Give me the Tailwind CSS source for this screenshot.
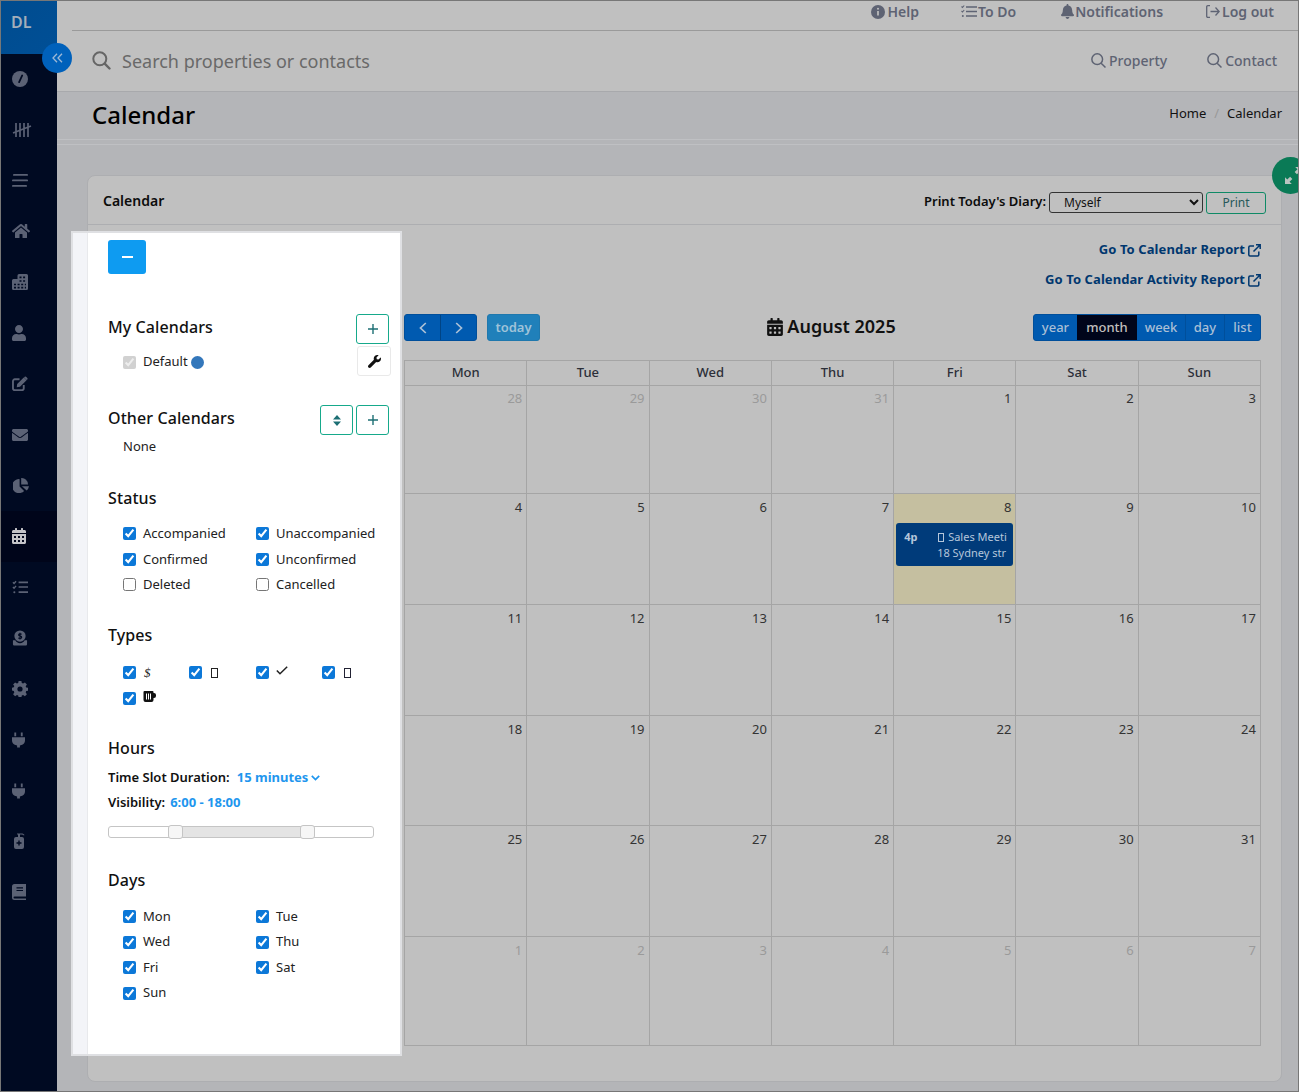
<!DOCTYPE html>
<html lang="en">
<head>
<meta charset="utf-8">
<title>Calendar</title>
<script src="https://cdn.jsdelivr.net/npm/@tailwindcss/browser@4"></script>
</head>
<body class="m-0 bg-[#b4b5b8]">
<div class="relative w-[1299px] h-[1092px] overflow-hidden flex border border-[#777] bg-[#b4b5b8] font-['Noto_Sans','Open_Sans',sans-serif] text-[13px] text-[#111]">

  <!-- sidebar -->
  <aside class="w-[56px] shrink-0 bg-[#000a22] flex flex-col text-[#5b6275]">
    <div class="h-[53px] bg-gradient-to-br from-[#004c8f] to-[#004f96] pl-[10px] pt-[9px] text-[16px] leading-[24px] font-semibold text-[#a3aeba]">DL</div>
    <div class="h-[50.75px] pl-[11px] flex items-center"><svg class="w-[16px] h-[16px]" viewBox="0 0 18 18"><circle cx="9" cy="9" r="9" fill="currentColor"/><path d="M8 12.5 L11.5 5" stroke="#000a22" stroke-width="2" stroke-linecap="round"/></svg></div>
    <div class="h-[50.75px] pl-[11px] flex items-center"><svg class="w-[20px] h-[16px]" viewBox="0 0 20 16" fill="none" stroke="currentColor" stroke-width="1.7"><path d="M4 1v14M8 1v14M12 1v14M16 1v14M1 11 19 4"/></svg></div>
    <div class="h-[50.75px] pl-[11px] flex items-center"><svg class="w-[16px] h-[13px]" viewBox="0 0 16 13" fill="currentColor"><rect x="1" y="0" width="15" height="1.8" rx=".9"/><rect x="0" y="5.500" width="16" height="1.8" rx=".9"/><rect x="0" y="11" width="15" height="1.8" rx=".9"/></svg></div>
    <div class="h-[50.75px] pl-[11px] flex items-center"><svg class="w-[18px] h-[16px] mt-[-2px]" viewBox="0 0 576 512" fill="currentColor"><path d="M280.37 148.26L96 300.11V464a16 16 0 0 0 16 16l112.06-.29a16 16 0 0 0 15.92-16V368a16 16 0 0 1 16-16h64a16 16 0 0 1 16 16v95.64a16 16 0 0 0 16 16.05L464 480a16 16 0 0 0 16-16V300L295.67 148.26a12.19 12.19 0 0 0-15.3 0zM571.6 251.47L488 182.56V44.05a12 12 0 0 0-12-12h-56a12 12 0 0 0-12 12v72.61L318.47 43a48 48 0 0 0-61 0L4.34 251.47a12 12 0 0 0-1.6 16.9l25.5 31A12 12 0 0 0 45.15 301l235.22-193.74a12.19 12.19 0 0 1 15.3 0L530.9 301a12 12 0 0 0 16.9-1.6l25.5-31a12 12 0 0 0-1.7-16.93z"/></svg></div>
    <div class="h-[50.75px] pl-[11px] flex items-center"><svg class="w-[16px] h-[16px]" viewBox="0 0 16 16"><path fill="currentColor" d="M7 0h7.5A1.5 1.5 0 0 1 16 1.5V14.5A1.5 1.5 0 0 1 14.5 16H1.5A1.5 1.5 0 0 1 0 14.5V6.5A1.5 1.5 0 0 1 1.5 5H5.5V1.5A1.5 1.5 0 0 1 7 0z"/><path stroke="#000a22" stroke-width="1.6" stroke-dasharray="2 1.6" d="M7.5 3.4H14M7.5 7H14M2 10.5H14M2 13.6H14" fill="none"/></svg></div>
    <div class="h-[50.75px] pl-[11px] flex items-center"><svg class="w-[14px] h-[16px]" viewBox="0 0 448 512" fill="currentColor"><path d="M224 256c70.7 0 128-57.3 128-128S294.7 0 224 0 96 57.3 96 128s57.3 128 128 128zm89.6 32h-16.7c-22.2 10.2-46.9 16-72.9 16s-50.6-5.8-72.9-16h-16.7C60.2 288 0 348.2 0 422.4V464c0 26.5 21.5 48 48 48h352c26.5 0 48-21.5 48-48v-41.6c0-74.2-60.2-134.4-134.4-134.4z"/></svg></div>
    <div class="h-[50.75px] pl-[11px] flex items-center"><svg class="w-[16px] h-[15px]" viewBox="0 0 17 16"><path fill="none" stroke="currentColor" stroke-width="2" d="M12.5 9.5V13a2 2 0 0 1-2 2H3a2 2 0 0 1-2-2V5.5a2 2 0 0 1 2-2h5"/><path fill="currentColor" d="M5.5 8.5 12.5 1.5 15.5 4.5 8.5 11.5 5 12z M13.5.8a1 1 0 0 1 1.4 0l1.4 1.4a1 1 0 0 1 0 1.4l-.7.7-2.8-2.8z"/></svg></div>
    <div class="h-[50.75px] pl-[11px] flex items-center"><svg class="w-[16px] h-[12px]" viewBox="0 64 512 384" preserveAspectRatio="none" fill="currentColor"><path d="M502.3 190.8c3.9-3.1 9.7-.2 9.7 4.7V400c0 26.5-21.5 48-48 48H48c-26.5 0-48-21.5-48-48V195.6c0-5 5.7-7.8 9.7-4.7 22.4 17.4 52.1 39.5 154.1 113.6 21.1 15.4 56.7 47.8 92.2 47.6 35.7.3 72-32.8 92.3-47.6 102-74.1 131.6-96.3 154-113.7zM256 320c23.2.4 56.6-29.2 73.4-41.4 132.7-96.3 142.8-104.7 173.4-128.7 5.8-4.5 9.2-11.5 9.2-18.9v-19c0-26.5-21.5-48-48-48H48C21.5 64 0 85.5 0 112v19c0 7.4 3.4 14.3 9.2 18.9 30.6 23.9 40.7 32.4 173.4 128.7 16.8 12.2 50.2 41.8 73.4 41.4z"/></svg></div>
    <div class="h-[50.75px] pl-[12px] flex items-center"><svg class="w-[16px] h-[15px]" viewBox="0 0 17 16" fill="currentColor"><path d="M7 2.2V9l4.8 4.8A7.5 7.5 0 1 1 7 1.2z"/><path d="M8.7 0A7 7 0 0 1 16 7H8.7z"/><path d="M9.5 8.7H17A7.5 7.5 0 0 1 14.5 13.3z"/></svg></div>
    <div class="h-[50.75px] pl-[11px] flex items-center bg-[#00051a] text-[#c4c4c8]"><svg class="w-[14px] h-[16px]" viewBox="0 0 448 512" fill="currentColor"><path d="M0 464c0 26.5 21.5 48 48 48h352c26.5 0 48-21.5 48-48V192H0v272zm320-196c0-6.6 5.4-12 12-12h40c6.6 0 12 5.4 12 12v40c0 6.6-5.4 12-12 12h-40c-6.6 0-12-5.4-12-12v-40zm0 128c0-6.6 5.4-12 12-12h40c6.6 0 12 5.4 12 12v40c0 6.6-5.4 12-12 12h-40c-6.6 0-12-5.4-12-12v-40zM192 268c0-6.6 5.4-12 12-12h40c6.6 0 12 5.4 12 12v40c0 6.6-5.4 12-12 12h-40c-6.6 0-12-5.4-12-12v-40zm0 128c0-6.6 5.4-12 12-12h40c6.6 0 12 5.4 12 12v40c0 6.6-5.4 12-12 12h-40c-6.6 0-12-5.4-12-12v-40zM64 268c0-6.6 5.4-12 12-12h40c6.6 0 12 5.4 12 12v40c0 6.6-5.4 12-12 12H76c-6.6 0-12-5.4-12-12v-40zm0 128c0-6.6 5.4-12 12-12h40c6.6 0 12 5.4 12 12v40c0 6.6-5.4 12-12 12H76c-6.6 0-12-5.4-12-12v-40zM400 64h-48V16c0-8.8-7.2-16-16-16h-32c-8.8 0-16 7.2-16 16v48H160V16c0-8.8-7.2-16-16-16h-32c-8.8 0-16 7.2-16 16v48H48C21.5 64 0 85.5 0 112v48h448v-48c0-26.5-21.5-48-48-48z"/></svg></div>
    <div class="h-[50.75px] pl-[11px] flex items-center"><svg class="w-[16px] h-[14px]" viewBox="0 0 17 14" fill="none" stroke="currentColor"><path stroke-width="1.5" d="M1 2 2.2 3.2 4.3.8M1 7 2.2 8.2 4.3 5.8"/><circle cx="2.5" cy="12.5" r="1.1" fill="currentColor" stroke="none"/><path stroke-width="1.8" d="M7 2H17M7 7H17M7 12.5H17"/></svg></div>
    <div class="h-[50.75px] pl-[11px] flex items-center"><svg class="w-[16px] h-[16px]" viewBox="0 0 17 16"><circle cx="8.5" cy="6" r="6" fill="currentColor"/><path fill="none" stroke="#000a22" stroke-width="1.2" d="M10.2 4.2C9.5 3.4 7 3.2 7 4.9 7 6.6 10.3 5.5 10.3 7.2 10.3 8.8 7.6 8.6 6.7 7.8M8.5 2.5v7"/><path fill="currentColor" d="M1 10.5h2.5c1 2 2.5 3 5 3s4-1 5-3H16v4.2a1.3 1.3 0 0 1-1.3 1.3H2.3A1.3 1.3 0 0 1 1 14.7z"/></svg></div>
    <div class="h-[50.75px] pl-[11px] flex items-center"><svg class="w-[16px] h-[16px] mt-[2px]" viewBox="0 0 16 16"><path fill="currentColor" d="M6.6 0h2.800l.4 2.100 1.300.5L12.900 1.400l2 2-1.200 1.800.5 1.300 2.100.4v2.800l-2.100.4-.5 1.300 1.200 1.800-2 2-1.800-1.200-1.300.5-.4 2.100H6.600l-.4-2.100-1.300-.5-1.800 1.200-2-2 1.200-1.800-.5-1.300L-.3 9.500V6.700l2.100-.4.5-1.300L1.100 3.400l2-2 1.800 1.200 1.300-.5z"/><circle cx="8" cy="8" r="2.600" fill="#000a22"/></svg></div>
    <div class="h-[50.75px] pl-[11px] flex items-center"><svg class="w-[13px] h-[16px] mt-[2px]" viewBox="0 0 14 16" fill="currentColor"><path d="M2.500 0h2v4h-2zM9.500 0h2v4h-2zM0 5h14v3.500c0 2-1 3.500-3 4.500L8.500 14v2H5.500v-2L3 13C1 12 0 10.500 0 8.500z"/></svg></div>
    <div class="h-[50.75px] pl-[11px] flex items-center"><svg class="w-[13px] h-[16px] mt-[2px]" viewBox="0 0 14 16" fill="currentColor"><path d="M2.500 0h2v4h-2zM9.500 0h2v4h-2zM0 5h14v3.500c0 2-1 3.500-3 4.500L8.500 14v2H5.500v-2L3 13C1 12 0 10.500 0 8.500z"/></svg></div>
    <div class="h-[50.75px] pl-[12px] flex items-center"><svg class="w-[12px] h-[17px]" viewBox="0 0 11 17"><path fill="currentColor" d="M3.500 1.500H8c1.500 0 2.500.6 3 1.600l-.6.4C9.800 2.800 9 2.500 8 2.500H6.500V5H8.500a2 2 0 0 1 2 2v8a2 2 0 0 1-2 2h-6a2 2 0 0 1-2-2V7a2 2 0 0 1 2-2h2V2.500h-1z"/><path stroke="#000a22" stroke-width="1.400" d="M5.500 8.500v5M3 11h5"/></svg></div>
    <div class="h-[50.75px] pl-[11px] flex items-center"><svg class="w-[14px] h-[16px] mt-[2px]" viewBox="0 0 14 16"><path fill="currentColor" d="M2.500 0H14v12.500H2.500a1 1 0 0 0 0 2H14V16H2.500A2.500 2.500 0 0 1 0 13.500V2.500A2.500 2.500 0 0 1 2.500 0z"/><path stroke="#000a22" stroke-width="1.200" d="M4.500 3.800h6.500M4.500 6.500h6.500"/></svg></div>
  </aside>

  <!-- main -->
  <div class="flex-1 min-w-0 flex flex-col">
    <header class="bg-[#c0c0c0] h-[91px] border-b border-[#a8a9ac] shrink-0">
      <div class="ml-[15px] h-[30px] border-b border-[#9a9a9a] flex justify-end items-center pr-[24px] pb-[8px] text-[14px] font-semibold text-[#5e6373]">
        <span class="flex items-center gap-[3px]"><svg class="w-[14px] h-[14px]" viewBox="0 0 14 14"><circle cx="7" cy="7" r="7" fill="currentColor"/><path stroke="#c0c0c0" stroke-width="1.700" d="M7 6v4.500"/><circle cx="7" cy="3.800" r="1" fill="#c0c0c0"/></svg>Help</span>
        <span class="flex items-center gap-[1px] ml-[42px]"><svg class="w-[16px] h-[13px]" viewBox="0 0 16 13" fill="none" stroke="currentColor"><path stroke-width="1.100" d="M.5 1.500 1.500 2.500 3.200.5M.5 6 1.500 7 3.200 5"/><circle cx="1.800" cy="11" r="1" fill="currentColor" stroke="none"/><path stroke-width="1.400" d="M5 2h11M5 6.500h11M5 11h11"/></svg>To Do</span>
        <span class="flex items-center gap-[1px] ml-[45px]"><svg class="w-[13px] h-[15px]" viewBox="0 0 448 512" fill="currentColor"><path d="M224 512c35.320 0 63.970-28.650 63.970-64H160.030c0 35.350 28.650 64 63.970 64zm215.390-149.710c-19.320-20.760-55.470-51.990-55.470-154.290 0-77.700-54.480-139.900-127.940-155.160V32c0-17.670-14.320-32-31.980-32s-31.980 14.330-31.980 32v20.840C118.560 68.100 64.080 130.300 64.080 208c0 102.300-36.150 133.530-55.470 154.290-6 6.450-8.660 14.160-8.610 21.710.110 16.400 12.980 32 32.100 32h383.800c19.120 0 32-15.600 32.100-32 .050-7.550-2.610-15.270-8.610-21.710z"/></svg>Notifications</span>
        <span class="flex items-center gap-[2px] ml-[43px]"><svg class="w-[14px] h-[13px]" viewBox="0 0 14 13" fill="none" stroke="currentColor" stroke-width="1.300"><path d="M4 .7H1.800A1.100 1.100 0 0 0 .7 1.800v9.400a1.100 1.100 0 0 0 1.100 1.100H4M9.500 2.500 13.200 6.500 9.500 10.500M13 6.500H4.500"/></svg>Log out</span>
      </div>
      <div class="h-[60px] flex items-center pl-[35px] pr-[21px]">
        <svg class="w-[19px] h-[19px] mt-[-2px]" viewBox="0 0 19 19" fill="none" stroke="#666" stroke-width="2"><circle cx="7.800" cy="7.800" r="6.500"/><path stroke-width="2.400" stroke-linecap="round" d="M12.700 12.700 17.500 17.500"/></svg>
        <span class="ml-[11px] text-[18px] text-[#696969]">Search properties or contacts</span>
        <span class="ml-auto mt-[-2px] flex items-center gap-[3px] text-[14px] font-medium text-[#5e6373]"><svg class="w-[15px] h-[15px]" viewBox="0 0 14 14" fill="none" stroke="currentColor" stroke-width="1.400"><circle cx="5.800" cy="5.800" r="5"/><path d="M9.500 9.500 13.500 13.500"/></svg>Property</span>
        <span class="ml-[40px] mt-[-2px] flex items-center gap-[3px] text-[14px] font-medium text-[#5e6373]"><svg class="w-[15px] h-[15px]" viewBox="0 0 14 14" fill="none" stroke="currentColor" stroke-width="1.400"><circle cx="5.800" cy="5.800" r="5"/><path d="M9.500 9.500 13.500 13.500"/></svg>Contact</span>
      </div>
    </header>

    <div class="h-[48px] shrink-0 border-b border-[#bfc0c3] flex items-center justify-between pl-[35px] pr-[16px]">
      <h1 class="text-[24px] font-medium text-black mt-[-2px]">Calendar</h1>
      <div class="text-[13px] text-[#111] flex items-center mt-[-3px]"><span>Home</span><span class="mx-[8px] text-[#999]">/</span><span>Calendar</span></div>
    </div>
    <div class="h-[5px] shrink-0 border-b border-[#bfc0c3]"></div>

    <section class="mt-[30px] ml-[30px] mr-[16px] h-[907px] bg-[#c0c0c0] border border-[#adaeb1] rounded-[8px] flex flex-col">
      <div class="h-[49px] shrink-0 border-b border-[#adaeb1] flex items-center justify-between pl-[15px] pr-[15px]">
        <span class="text-[14px] font-semibold text-[#0c0c0c]">Calendar</span>
        <div class="flex items-center text-[13px] mt-[4px]">
          <span class="font-semibold text-[#0c0c0c] mr-[3px] mt-[-1px]">Print Today's Diary:</span>
          <select class="w-[154px] h-[21px] border border-[#333] rounded-[3px] bg-transparent pl-[10px] text-[12px] text-[#111]"><option>Myself</option></select>
          <button class="ml-[3px] mt-[1px] w-[60px] h-[22px] border border-[#0f8a66] rounded-[3px] text-[12px] text-[#27585a]">Print</button>
        </div>
      </div>

      <div class="pl-[316px] pr-[20px] flex flex-col">
        <div class="mt-[16px] h-[18px] flex justify-end items-center gap-[3px] text-[13px] font-bold tracking-[0.08px] text-[#00376f]">Go To Calendar Report
          <svg class="w-[13px] h-[13px]" viewBox="0 0 13 13" fill="none" stroke="currentColor" stroke-width="1.500"><path d="M6 2H2a1.200 1.200 0 0 0-1.200 1.200v7.600A1.200 1.200 0 0 0 2 12h7.600a1.200 1.200 0 0 0 1.200-1.200V7.500M5.500 7.500 12 1M8 .8h4.200V5"/></svg></div>
        <div class="mt-[12px] h-[18px] flex justify-end items-center gap-[3px] text-[13px] font-bold tracking-[0.08px] text-[#00376f]">Go To Calendar Activity Report
          <svg class="w-[13px] h-[13px]" viewBox="0 0 13 13" fill="none" stroke="currentColor" stroke-width="1.500"><path d="M6 2H2a1.200 1.200 0 0 0-1.200 1.200v7.600A1.200 1.200 0 0 0 2 12h7.600a1.200 1.200 0 0 0 1.200-1.200V7.500M5.500 7.500 12 1M8 .8h4.200V5"/></svg></div>

        <div class="mt-[25px] h-[27px] grid grid-cols-3 items-center">
          <div class="flex items-center">
            <div class="flex h-[27px] w-[73px] rounded-[3px] overflow-hidden bg-[#005ab0] border border-[#004f9b]">
              <span class="w-[36px] border-r border-[#004484] flex items-center justify-center"><svg class="w-[8px] h-[12px]" viewBox="0 0 8 12" fill="none" stroke="#a9bfd6" stroke-width="1.700"><path d="M6.800 1 1.500 6 6.800 11"/></svg></span>
              <span class="flex-1 flex items-center justify-center"><svg class="w-[8px] h-[12px]" viewBox="0 0 8 12" fill="none" stroke="#a9bfd6" stroke-width="1.700"><path d="M1.200 1 6.500 6 1.200 11"/></svg></span>
            </div>
            <span class="ml-[10px] w-[53px] h-[27px] rounded-[3px] bg-[#2080ba] border border-[#1f78ad] flex items-center justify-center text-[13px] font-semibold text-[#9fc3d9]">today</span>
          </div>
          <div class="flex items-center justify-center gap-[4px] text-[18px] font-semibold text-[#111] mt-[-2px] ml-[-2px]">
            <svg class="w-[16px] h-[18px]" viewBox="0 0 448 512" fill="currentColor"><path d="M0 464c0 26.500 21.500 48 48 48h352c26.500 0 48-21.500 48-48V192H0v272zm320-196c0-6.600 5.400-12 12-12h40c6.600 0 12 5.400 12 12v40c0 6.600-5.400 12-12 12h-40c-6.600 0-12-5.400-12-12v-40zm0 128c0-6.600 5.400-12 12-12h40c6.600 0 12 5.400 12 12v40c0 6.600-5.400 12-12 12h-40c-6.600 0-12-5.400-12-12v-40zM192 268c0-6.600 5.400-12 12-12h40c6.600 0 12 5.400 12 12v40c0 6.600-5.400 12-12 12h-40c-6.600 0-12-5.400-12-12v-40zm0 128c0-6.600 5.400-12 12-12h40c6.600 0 12 5.400 12 12v40c0 6.600-5.400 12-12 12h-40c-6.600 0-12-5.400-12-12v-40zM64 268c0-6.600 5.400-12 12-12h40c6.600 0 12 5.400 12 12v40c0 6.600-5.400 12-12 12H76c-6.600 0-12-5.400-12-12v-40zm0 128c0-6.600 5.400-12 12-12h40c6.600 0 12 5.400 12 12v40c0 6.600-5.400 12-12 12H76c-6.600 0-12-5.400-12-12v-40zM400 64h-48V16c0-8.800-7.200-16-16-16h-32c-8.800 0-16 7.200-16 16v48H160V16c0-8.800-7.200-16-16-16h-32c-8.800 0-16 7.200-16 16v48H48C21.500 64 0 85.500 0 112v48h448v-48c0-26.500-21.500-48-48-48z"/></svg>August 2025</div>
          <div class="flex justify-end">
            <div class="flex h-[27px] rounded-[3px] overflow-hidden bg-[#005ab0] border border-[#004f9b] text-[13px] font-medium text-[#a9bfd6]">
              <span class="w-[43px] flex items-center justify-center">year</span>
              <span class="w-[60px] flex items-center justify-center bg-[#00051a] text-[#c0bfbd]">month</span>
              <span class="w-[49px] border-r border-[#004f9b] flex items-center justify-center">week</span>
              <span class="w-[39px] border-r border-[#004f9b] flex items-center justify-center">day</span>
              <span class="w-[35px] flex items-center justify-center">list</span>
            </div>
          </div>
        </div>

        <div class="mt-[19px] grid grid-cols-7 grid-rows-[25px_108px_111px_111px_110px_111px_109px] border-l border-t border-[#a5a5a5] text-[13px] text-[#333] text-right">
          <div class="border-r border-b border-[#a5a5a5] flex items-center justify-center font-medium text-[#2c2f38]">Mon</div>
          <div class="border-r border-b border-[#a5a5a5] flex items-center justify-center font-medium text-[#2c2f38]">Tue</div>
          <div class="border-r border-b border-[#a5a5a5] flex items-center justify-center font-medium text-[#2c2f38]">Wed</div>
          <div class="border-r border-b border-[#a5a5a5] flex items-center justify-center font-medium text-[#2c2f38]">Thu</div>
          <div class="border-r border-b border-[#a5a5a5] flex items-center justify-center font-medium text-[#2c2f38]">Fri</div>
          <div class="border-r border-b border-[#a5a5a5] flex items-center justify-center font-medium text-[#2c2f38]">Sat</div>
          <div class="border-r border-b border-[#a5a5a5] flex items-center justify-center font-medium text-[#2c2f38]">Sun</div>

          <div class="border-r border-b border-[#a5a5a5] pr-[4px] pt-[3px] text-[#9a9a9a]">28</div>
          <div class="border-r border-b border-[#a5a5a5] pr-[4px] pt-[3px] text-[#9a9a9a]">29</div>
          <div class="border-r border-b border-[#a5a5a5] pr-[4px] pt-[3px] text-[#9a9a9a]">30</div>
          <div class="border-r border-b border-[#a5a5a5] pr-[4px] pt-[3px] text-[#9a9a9a]">31</div>
          <div class="border-r border-b border-[#a5a5a5] pr-[4px] pt-[3px]">1</div>
          <div class="border-r border-b border-[#a5a5a5] pr-[4px] pt-[3px]">2</div>
          <div class="border-r border-b border-[#a5a5a5] pr-[4px] pt-[3px]">3</div>

          <div class="border-r border-b border-[#a5a5a5] pr-[4px] pt-[4px]">4</div>
          <div class="border-r border-b border-[#a5a5a5] pr-[4px] pt-[4px]">5</div>
          <div class="border-r border-b border-[#a5a5a5] pr-[4px] pt-[4px]">6</div>
          <div class="border-r border-b border-[#a5a5a5] pr-[4px] pt-[4px]">7</div>
          <div class="border-r border-b border-[#a5a5a5] pr-[4px] pt-[4px] bg-[#c5bfa0] flex flex-col">
            <span>8</span>
            <div class="mt-[5px] ml-[2px] mr-[-2px] h-[43px] rounded-[3px] bg-[#003b7a] text-left text-[11px] leading-[16px] text-[#b5c6da] relative">
              <div class="flex pt-[6px] pl-[8px]"><span class="font-bold w-[34px]">4p</span><span class="inline-block w-[6px] h-[9px] border border-[#b5c6da] mt-[4px] mr-[4px]"></span><span class="whitespace-nowrap">Sales Meeti</span></div>
              <div class="pl-[41px] whitespace-nowrap">18 Sydney str</div>
            </div>
          </div>
          <div class="border-r border-b border-[#a5a5a5] pr-[4px] pt-[4px]">9</div>
          <div class="border-r border-b border-[#a5a5a5] pr-[4px] pt-[4px]">10</div>

          <div class="border-r border-b border-[#a5a5a5] pr-[4px] pt-[4px]">11</div>
          <div class="border-r border-b border-[#a5a5a5] pr-[4px] pt-[4px]">12</div>
          <div class="border-r border-b border-[#a5a5a5] pr-[4px] pt-[4px]">13</div>
          <div class="border-r border-b border-[#a5a5a5] pr-[4px] pt-[4px]">14</div>
          <div class="border-r border-b border-[#a5a5a5] pr-[4px] pt-[4px]">15</div>
          <div class="border-r border-b border-[#a5a5a5] pr-[4px] pt-[4px]">16</div>
          <div class="border-r border-b border-[#a5a5a5] pr-[4px] pt-[4px]">17</div>

          <div class="border-r border-b border-[#a5a5a5] pr-[4px] pt-[4px]">18</div>
          <div class="border-r border-b border-[#a5a5a5] pr-[4px] pt-[4px]">19</div>
          <div class="border-r border-b border-[#a5a5a5] pr-[4px] pt-[4px]">20</div>
          <div class="border-r border-b border-[#a5a5a5] pr-[4px] pt-[4px]">21</div>
          <div class="border-r border-b border-[#a5a5a5] pr-[4px] pt-[4px]">22</div>
          <div class="border-r border-b border-[#a5a5a5] pr-[4px] pt-[4px]">23</div>
          <div class="border-r border-b border-[#a5a5a5] pr-[4px] pt-[4px]">24</div>

          <div class="border-r border-b border-[#a5a5a5] pr-[4px] pt-[4px]">25</div>
          <div class="border-r border-b border-[#a5a5a5] pr-[4px] pt-[4px]">26</div>
          <div class="border-r border-b border-[#a5a5a5] pr-[4px] pt-[4px]">27</div>
          <div class="border-r border-b border-[#a5a5a5] pr-[4px] pt-[4px]">28</div>
          <div class="border-r border-b border-[#a5a5a5] pr-[4px] pt-[4px]">29</div>
          <div class="border-r border-b border-[#a5a5a5] pr-[4px] pt-[4px]">30</div>
          <div class="border-r border-b border-[#a5a5a5] pr-[4px] pt-[4px]">31</div>

          <div class="border-r border-b border-[#a5a5a5] pr-[4px] pt-[4px] text-[#9a9a9a]">1</div>
          <div class="border-r border-b border-[#a5a5a5] pr-[4px] pt-[4px] text-[#9a9a9a]">2</div>
          <div class="border-r border-b border-[#a5a5a5] pr-[4px] pt-[4px] text-[#9a9a9a]">3</div>
          <div class="border-r border-b border-[#a5a5a5] pr-[4px] pt-[4px] text-[#9a9a9a]">4</div>
          <div class="border-r border-b border-[#a5a5a5] pr-[4px] pt-[4px] text-[#9a9a9a]">5</div>
          <div class="border-r border-b border-[#a5a5a5] pr-[4px] pt-[4px] text-[#9a9a9a]">6</div>
          <div class="border-r border-b border-[#a5a5a5] pr-[4px] pt-[4px] text-[#9a9a9a]">7</div>
        </div>
      </div>
    </section>
  </div>

  <!-- collapse button over the sidebar edge -->
  <div class="absolute left-[41px] top-[42px] w-[30px] h-[30px] rounded-full bg-[#0061bb] flex items-center justify-center">
    <svg class="w-[11px] h-[10px]" viewBox="0 0 11 10" fill="none" stroke="#9fb9d6" stroke-width="1.300"><path d="M5 .8 1 5 5 9.200M10 .8 6 5 10 9.200"/></svg>
  </div>

  <!-- green expand tab -->
  <div class="absolute left-[1271px] top-[156px] w-[37px] h-[37px] rounded-full bg-[#0a7a56] flex items-center pl-[13px]">
    <svg class="w-[17px] h-[17px] shrink-0" viewBox="0 0 15 15" fill="#b9c4c0"><path d="M0 15V9l2 2 2.500-2.500 2 2L4 13l2 2zM15 0v6l-2-2-2.500 2.500-2-2L11 2 9 0z"/></svg>
  </div>

  <!-- white options panel -->
  <div class="absolute left-[70px] top-[230px] w-[331px] h-[825px] border-2 border-[#dfe0e3] bg-white flex text-[#222]">
    <div class="w-[15px] shrink-0 bg-[#f3f4f8] border-r border-[#e8e9ec]"></div>
    <div class="flex-1 pl-[20px] flex flex-col">
      <button class="mt-[7px] w-[38px] h-[34px] shrink-0 rounded-[3px] bg-[#0e9bf1] flex items-center justify-center"><span class="w-[11px] h-[2px] bg-white"></span></button>

      <div class="mt-[40px] h-[30px] flex items-center justify-between pr-[11px]">
        <h2 class="text-[16px] font-medium tracking-[0.1px] text-[#111] mt-[-4px]">My Calendars</h2>
        <button class="w-[33px] h-[30px] border border-[#16a98b] rounded-[3px] flex items-center justify-center"><svg class="w-[10px] h-[10px]" viewBox="0 0 10 10" stroke="#1d6f74" stroke-width="1.400"><path d="M5 0v10M0 5h10"/></svg></button>
      </div>
      <div class="mt-[2px] h-[30px] flex items-center justify-between pl-[15px] pr-[9px]">
        <label class="flex items-center mt-[2px]"><input type="checkbox" checked disabled class="w-[13px] h-[13px] m-0"><span class="ml-[7px]">Default</span><span class="ml-[3px] w-[13px] h-[13px] rounded-full bg-[#3377bb]"></span></label>
        <button class="w-[34px] h-[30px] border border-[#e9e9e9] rounded-[3px] flex items-center justify-center"><svg class="w-[13px] h-[13px]" viewBox="0 0 512 512" fill="#111"><path d="M507.730 109.100c-2.240-9.030-13.540-12.090-20.120-5.510l-74.360 74.360-67.880-11.310-11.310-67.880 74.360-74.360c6.620-6.620 3.430-17.900-5.660-20.160-47.380-11.740-99.550.910-136.580 37.930-39.640 39.640-50.550 97.100-34.050 147.200L18.740 402.760c-24.990 24.990-24.990 65.510 0 90.500 24.990 24.990 65.510 24.990 90.500 0l213.210-213.210c50.120 16.710 107.470 5.680 147.370-34.220 37.070-37.070 49.700-89.320 37.910-136.730z"/></svg></button>
      </div>

      <div class="mt-[29px] h-[30px] flex items-center justify-between pr-[11px]">
        <h2 class="text-[16px] font-medium tracking-[0.1px] text-[#111] mt-[-4px]">Other Calendars</h2>
        <div class="flex gap-[3px]">
          <button class="w-[33px] h-[30px] border border-[#16a98b] rounded-[3px] flex items-center justify-center"><svg class="w-[8px] h-[11px]" viewBox="0 0 8 11" fill="#1d6f74"><path d="M4 0 8 4.500H0zM4 11 0 6.500H8z"/></svg></button>
          <button class="w-[33px] h-[30px] border border-[#16a98b] rounded-[3px] flex items-center justify-center"><svg class="w-[10px] h-[10px]" viewBox="0 0 10 10" stroke="#1d6f74" stroke-width="1.400"><path d="M5 0v10M0 5h10"/></svg></button>
        </div>
      </div>
      <div class="mt-[1px] h-[20px] pl-[15px] leading-[20px]">None</div>

      <h2 class="mt-[30px] h-[24px] text-[16px] leading-[24px] font-medium tracking-[0.1px] text-[#111]">Status</h2>
      <div class="mt-[11px] pl-[15px] grid grid-cols-[133px_1fr] auto-rows-[25.5px] items-center">
        <label class="flex items-center"><input type="checkbox" checked class="w-[13px] h-[13px] m-0 accent-[#0c78d8]"><span class="ml-[7px]">Accompanied</span></label>
        <label class="flex items-center"><input type="checkbox" checked class="w-[13px] h-[13px] m-0 accent-[#0c78d8]"><span class="ml-[7px]">Unaccompanied</span></label>
        <label class="flex items-center"><input type="checkbox" checked class="w-[13px] h-[13px] m-0 accent-[#0c78d8]"><span class="ml-[7px]">Confirmed</span></label>
        <label class="flex items-center"><input type="checkbox" checked class="w-[13px] h-[13px] m-0 accent-[#0c78d8]"><span class="ml-[7px]">Unconfirmed</span></label>
        <label class="flex items-center"><input type="checkbox" class="w-[13px] h-[13px] m-0"><span class="ml-[7px]">Deleted</span></label>
        <label class="flex items-center"><input type="checkbox" class="w-[13px] h-[13px] m-0"><span class="ml-[7px]">Cancelled</span></label>
      </div>

      <h2 class="mt-[25px] h-[24px] text-[16px] leading-[24px] font-medium tracking-[0.1px] text-[#111]">Types</h2>
      <div class="mt-[13px] pl-[15px] grid grid-cols-[66px_67px_66px_66px] auto-rows-[26px] items-center">
        <label class="flex items-center"><input type="checkbox" checked class="w-[13px] h-[13px] m-0 accent-[#0c78d8]"><span class="ml-[8px] text-[13px] italic font-['Liberation_Serif',serif]">$</span></label>
        <label class="flex items-center"><input type="checkbox" checked class="w-[13px] h-[13px] m-0 accent-[#0c78d8]"><span class="ml-[9px] w-[7px] h-[10px] border border-[#222]"></span></label>
        <label class="flex items-center"><input type="checkbox" checked class="w-[13px] h-[13px] m-0 accent-[#0c78d8]"><svg class="ml-[7px] mt-[-4px] w-[12px] h-[9px]" viewBox="0 0 12 9" fill="none" stroke="#222" stroke-width="1.500"><path d="M.8 4.500 4 7.800 11.200 .8"/></svg></label>
        <label class="flex items-center"><input type="checkbox" checked class="w-[13px] h-[13px] m-0 accent-[#0c78d8]"><span class="ml-[9px] w-[7px] h-[10px] border border-[#223]"></span></label>
        <label class="flex items-center"><input type="checkbox" checked class="w-[13px] h-[13px] m-0 accent-[#0c78d8]"><svg class="ml-[7px] mt-[-5px] w-[13px] h-[11px]" viewBox="0 0 13 11"><path fill="#111" d="M1.500 0H9.500a1 1 0 0 1 1 1V2h.5A2 2 0 0 1 13 4V5a2 2 0 0 1-2 2h-.5V9a2 2 0 0 1-2 2h-6a2 2 0 0 1-2-2V1a1 1 0 0 1 1-1z"/><path stroke="#fff" stroke-width="1" d="M3.500 2.500V8.500M5.500 2.500V8.500M7.500 2.500V8.500"/></svg></label>
      </div>

      <h2 class="mt-[24px] h-[24px] text-[16px] leading-[24px] font-medium tracking-[0.1px] text-[#111]">Hours</h2>
      <div class="mt-[8px] h-[20px] flex items-center font-semibold text-[#111]">Time Slot Duration:<span class="ml-[7px] font-bold text-[#1e96ee]">15 minutes</span><svg class="ml-[3px] w-[9px] h-[6px]" viewBox="0 0 9 6" fill="none" stroke="#1e96ee" stroke-width="1.700"><path d="M.8 .8 4.500 4.500 8.200 .8"/></svg></div>
      <div class="mt-[5px] h-[20px] flex items-center font-semibold text-[#111]">Visibility:<span class="ml-[5px] font-bold text-[#1e96ee]">6:00 - 18:00</span></div>
      <div class="mt-[13px] relative w-[266px] h-[12px] border border-[#c5c5c5] rounded-[3px] bg-white">
        <div class="absolute left-[66px] w-[132px] top-0 bottom-0 bg-[#e4e4e4]"></div>
        <span class="absolute left-[59px] top-[-2px] w-[15px] h-[14px] bg-[#f6f6f6] border border-[#c5c5c5] rounded-[3px]"></span>
        <span class="absolute left-[191px] top-[-2px] w-[15px] h-[14px] bg-[#f6f6f6] border border-[#c5c5c5] rounded-[3px]"></span>
      </div>

      <h2 class="mt-[30px] h-[24px] text-[16px] leading-[24px] font-medium tracking-[0.1px] text-[#111]">Days</h2>
      <div class="mt-[12.25px] pl-[15px] grid grid-cols-[133px_1fr] auto-rows-[25.5px] items-center">
        <label class="flex items-center"><input type="checkbox" checked class="w-[13px] h-[13px] m-0 accent-[#0c78d8]"><span class="ml-[7px]">Mon</span></label>
        <label class="flex items-center"><input type="checkbox" checked class="w-[13px] h-[13px] m-0 accent-[#0c78d8]"><span class="ml-[7px]">Tue</span></label>
        <label class="flex items-center"><input type="checkbox" checked class="w-[13px] h-[13px] m-0 accent-[#0c78d8]"><span class="ml-[7px]">Wed</span></label>
        <label class="flex items-center"><input type="checkbox" checked class="w-[13px] h-[13px] m-0 accent-[#0c78d8]"><span class="ml-[7px]">Thu</span></label>
        <label class="flex items-center"><input type="checkbox" checked class="w-[13px] h-[13px] m-0 accent-[#0c78d8]"><span class="ml-[7px]">Fri</span></label>
        <label class="flex items-center"><input type="checkbox" checked class="w-[13px] h-[13px] m-0 accent-[#0c78d8]"><span class="ml-[7px]">Sat</span></label>
        <label class="flex items-center"><input type="checkbox" checked class="w-[13px] h-[13px] m-0 accent-[#0c78d8]"><span class="ml-[7px]">Sun</span></label>
      </div>
    </div>
  </div>
</div>
</body>
</html>
